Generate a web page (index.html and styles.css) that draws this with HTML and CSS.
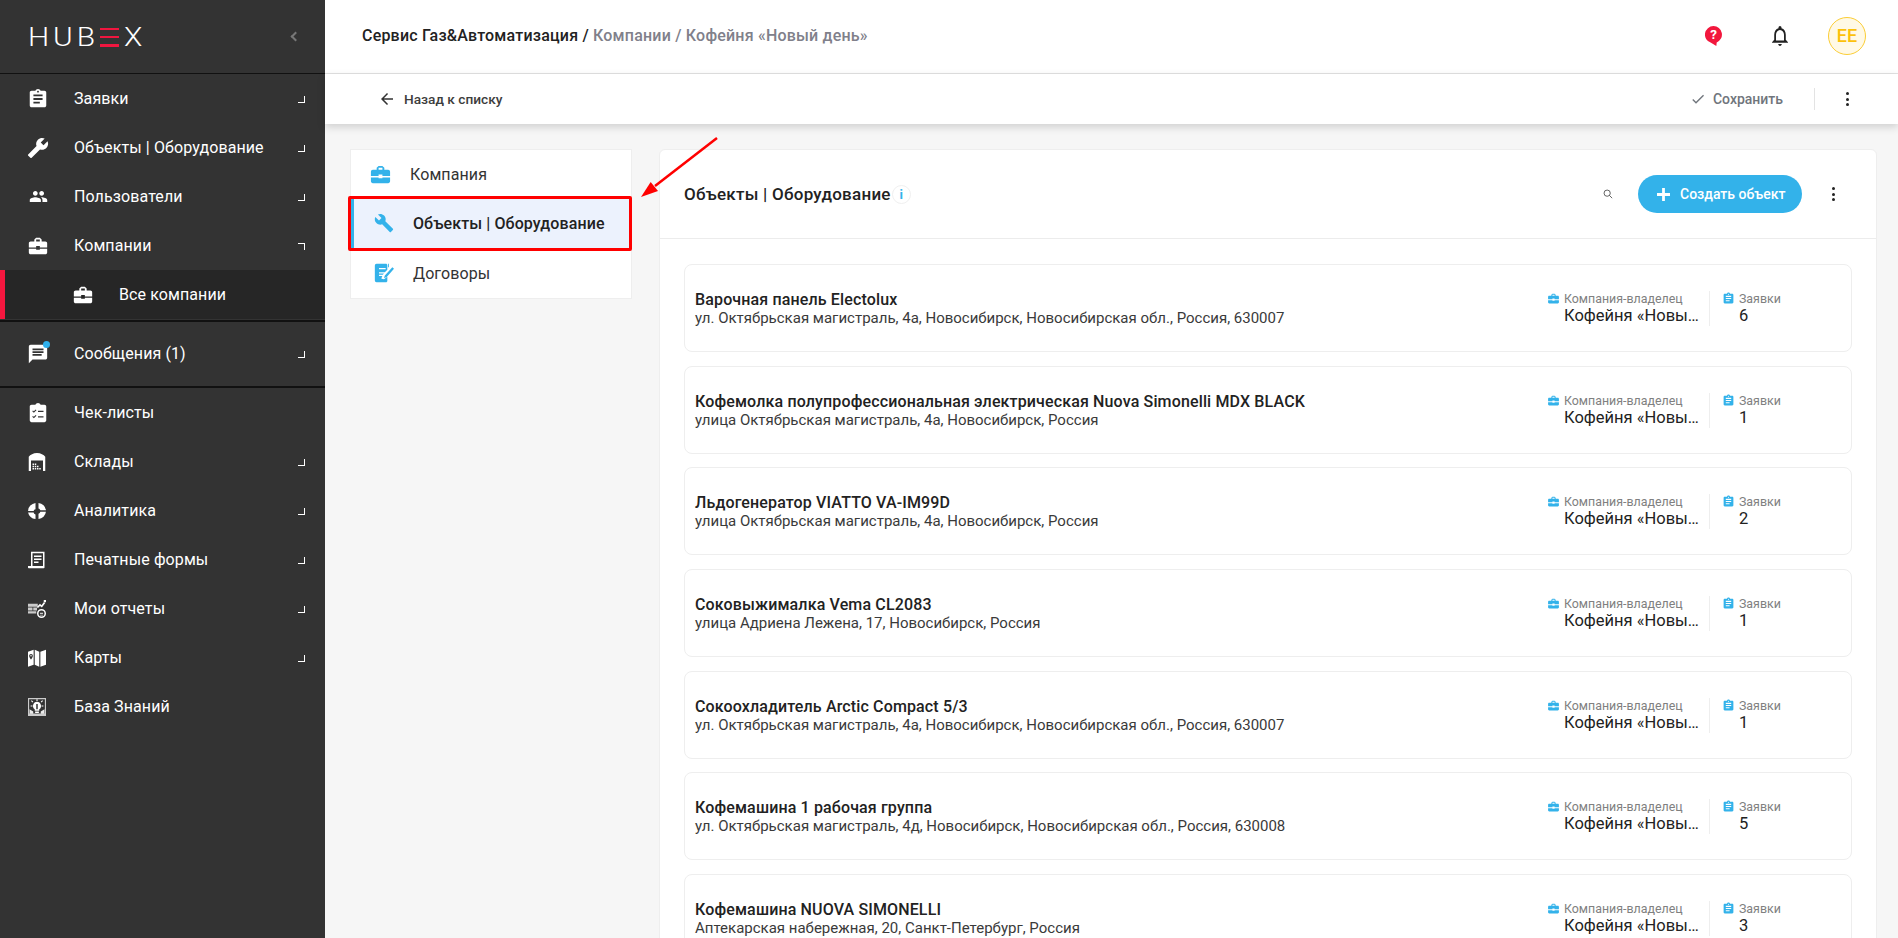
FILE: index.html
```html
<!DOCTYPE html>
<html lang="ru">
<head>
<meta charset="utf-8">
<title>Hubex</title>
<link rel="stylesheet" href="styles.css">
</head>
<body>
<svg class="defs" width="0" height="0" aria-hidden="true">
  <symbol id="i-assign" viewBox="0 0 24 24"><path d="M19 3h-4.18C14.4 1.84 13.3 1 12 1c-1.3 0-2.4.84-2.82 2H5c-1.1 0-2 .9-2 2v14c0 1.1.9 2 2 2h14c1.1 0 2-.9 2-2V5c0-1.1-.9-2-2-2zm-7 0c.55 0 1 .45 1 1s-.45 1-1 1-1-.45-1-1 .45-1 1-1zm2 14H7v-2h7v2zm3-4H7v-2h10v2zm0-4H7V7h10v2z"/></symbol>
  <symbol id="i-wrench" viewBox="0 0 24 24"><path d="M22.7 19l-9.1-9.1c.9-2.3.4-5-1.5-6.9-2-2-5-2.4-7.4-1.3L9 6 6 9 1.6 4.7C.4 7.1.9 10.1 2.9 12.1c1.9 1.9 4.6 2.4 6.9 1.5l9.1 9.1c.4.4 1 .4 1.4 0l2.3-2.3c.5-.4.5-1.1.1-1.4z"/></symbol>
  <symbol id="i-people" viewBox="0 0 24 24"><path d="M16 11c1.66 0 2.99-1.34 2.99-3S17.66 5 16 5c-1.66 0-3 1.34-3 3s1.34 3 3 3zm-8 0c1.66 0 2.99-1.34 2.99-3S9.66 5 8 5C6.34 5 5 6.34 5 8s1.34 3 3 3zm0 2c-2.33 0-7 1.17-7 3.5V19h14v-2.5c0-2.33-4.67-3.5-7-3.5zm8 0c-.29 0-.62.02-.97.05 1.16.84 1.97 1.97 1.97 3.45V19h6v-2.5c0-2.33-4.67-3.5-7-3.5z"/></symbol>
  <symbol id="i-case" viewBox="0 0 24 24"><path d="M10 16v-1H2v4c0 1.11.89 2 2 2h16c1.11 0 2-.89 2-2v-4h-8v1h-4zm10-9h-4.01V5l-2-2h-4l-2 2v2H4c-1.1 0-2 .9-2 2v4.500h8V12h4v1.500h8V9c0-1.1-.9-2-2-2zm-6 0h-4V5h4v2z"/></symbol>
  <symbol id="i-msg" viewBox="0 0 24 24"><path d="M20 2H4c-1.1 0-1.99.9-1.99 2L2 22l4-4h14c1.1 0 2-.9 2-2V4c0-1.1-.9-2-2-2zm-4 12H6v-2h10v2zm2-3H6V9h12v2zm0-3H6V6h12v2z"/></symbol>
  <symbol id="i-check-list" viewBox="0 0 24 24"><path fill-rule="evenodd" d="M19 3h-4.200C14.400 1.800 13.300 1 12 1s-2.400.8-2.800 2H5c-1.100 0-2 .9-2 2v15c0 1.100.9 2 2 2h14c1.100 0 2-.9 2-2V5c0-1.100-.9-2-2-2zM6.500 9.200l1 1 2-2 .8.8-2.800 2.800-1.800-1.800zM12 9.500h6V11h-6zM6.500 15.200l1 1 2-2 .8.8-2.800 2.800-1.800-1.800zM12 15.500h6V17h-6z"/></symbol>
  <symbol id="i-store" viewBox="0 0 24 24"><path fill-rule="evenodd" d="M12 0C7 0 3 2.500 1 5v19h22V5c-2-2.500-6-5-11-5zM4 10h16v14H4z"/><path d="M6 14h2v2H6zm3 0h2v2H9zm-3 3h2v2H6zm3 0h2v2H9zm3 0h2v2h-2zm-6 3h2v2H6zm3 0h2v2H9zm3 0h2v2h-2zm3 0h2v2h-2z"/></symbol>
  <symbol id="i-pie" viewBox="0 0 24 24"><path d="M10 1.200v8.300a3 3 0 0 0-2.500 2.500H0.100A11.500 11.500 0 0 1 10 1.200zM.1 14h7.400a3 3 0 0 0 2.500 2.500v6.300A11.500 11.500 0 0 1 .1 14zM14 1.200a11 11 0 0 1 9.900 9.800h-7.400a3.500 3.500 0 0 0-2.500-2.500zM14 15.500a3.500 3.500 0 0 0 2.500-2.500h7.400a11 11 0 0 1-9.900 9.800z"/></symbol>
  <symbol id="i-print" viewBox="0 0 24 24"><path fill-rule="evenodd" d="M4 1h18v21a1 1 0 0 1-1 1H1a1 1 0 0 1-1-1v-2h4zm2 2v17h14V3zM8 6h10v2H8zm0 4h10v2H8zm0 4h6v2H8z"/></symbol>
  <symbol id="i-report" viewBox="0 0 24 24"><path opacity=".75" d="M0 5h13v4H0zm0 5h6v4H0zm7 0h5v4H7zM0 15h11v3H0z"/><path d="M12 9l4-4 2 2 3-4 2 1-4.500 6-2.500-2-3 3zM21 0h3v3h-3z"/><path fill-rule="evenodd" d="M18 12a6 6 0 1 0 0 12 6 6 0 0 0 0-12zm0 2a4 4 0 1 1 0 8 4 4 0 0 1 0-8z"/><path opacity=".75" d="M16 17h4v1.500h-4zm0 2.500h4v1h-4z"/></symbol>
  <symbol id="i-map" viewBox="0 0 24 24"><path fill-rule="evenodd" d="M0 3.500 7.500 1v20L0 23.500zM4 6.500a2.500 2.500 0 0 0-2.500 2.500C1.500 11 4 14 4 14s2.500-3 2.500-5A2.500 2.500 0 0 0 4 6.500zm0 1.500a1 1 0 1 1 0 2 1 1 0 0 1 0-2zM9 1l6 2.500v20L9 21zM16.500 3.500 24 1v20l-7.500 2.500z"/></symbol>
  <symbol id="i-know" viewBox="0 0 24 24"><path opacity=".75" fill-rule="evenodd" d="M0 0h24v24H0zm1.500 1.500v19h21v-19z"/><path opacity=".9" d="M2 15l5 3v3H2zm20 0l-5 3v3h5z"/><path fill-rule="evenodd" d="M12 5a5.500 5.500 0 0 0-3 10v2h6v-2a5.500 5.500 0 0 0-3-10zm-1 3h2v7h-2z"/><path d="M9.500 18h5v2h-5zM11.300 1.500h1.400v2.500h-1.400zM4 4l1-1 2 2-1 1zM20 4l-1-1-2 2 1 1zM3.500 10h2.500v1.400H3.500zM18 10h2.500v1.400H18z"/></symbol>
  <symbol id="i-contract" viewBox="0 0 24 24"><path d="M3 1h12l1 1v6l-3 3H6v1.500h6L10.500 14H6v1.500h4L9 18v1l3 .5 4-3V22l-1 1H3a2 2 0 0 1-2-2V3a2 2 0 0 1 2-2zm3 5v1.500h8V6z"/><path d="M22 5l2 2-9 10-3 1 1-3zM18 1v4h-1V1z"/></symbol>
</svg>

<div class="app">
  <aside class="sidebar">
    <div class="brand">
      <span class="logo"><span class="logo-hub">HUB</span><span class="logo-e"><i></i><i></i><i></i></span><span class="logo-x">X</span></span>
      <span class="collapse"></span>
    </div>
    <nav class="menu">
      <a class="menu-item"><svg class="mi"><use href="#i-assign"/></svg><span>Заявки</span><b class="corner"></b></a>
      <a class="menu-item"><svg class="mi flip"><use href="#i-wrench"/></svg><span>Объекты | Оборудование</span><b class="corner"></b></a>
      <a class="menu-item"><svg class="mi mi-sm"><use href="#i-people"/></svg><span>Пользователи</span><b class="corner"></b></a>
      <a class="menu-item"><svg class="mi"><use href="#i-case"/></svg><span>Компании</span><b class="corner open"></b></a>
      <a class="menu-item child"><svg class="mi"><use href="#i-case"/></svg><span>Все компании</span></a>
    </nav>
    <nav class="menu msgs">
      <a class="menu-item"><span class="badge-wrap"><svg class="mi"><use href="#i-msg"/></svg><i class="dot"></i></span><span>Сообщения (1)</span><b class="corner"></b></a>
    </nav>
    <nav class="menu rest">
      <a class="menu-item"><svg class="mi"><use href="#i-check-list"/></svg><span>Чек-листы</span></a>
      <a class="menu-item"><svg class="mi mi-box"><use href="#i-store"/></svg><span>Склады</span><b class="corner"></b></a>
      <a class="menu-item"><svg class="mi mi-box"><use href="#i-pie"/></svg><span>Аналитика</span><b class="corner"></b></a>
      <a class="menu-item"><svg class="mi mi-box"><use href="#i-print"/></svg><span>Печатные формы</span><b class="corner"></b></a>
      <a class="menu-item"><svg class="mi mi-box"><use href="#i-report"/></svg><span>Мои отчеты</span><b class="corner"></b></a>
      <a class="menu-item"><svg class="mi mi-box"><use href="#i-map"/></svg><span>Карты</span><b class="corner"></b></a>
      <a class="menu-item"><svg class="mi mi-box"><use href="#i-know"/></svg><span>База Знаний</span></a>
    </nav>
  </aside>

  <div class="content">
    <header class="topbar">
      <div class="crumbs"><span class="crumb-root">Сервис Газ&amp;Автоматизация /</span> <span>Компании</span> / <span>Кофейня «Новый день»</span></div>
      <div class="top-icons">
        <svg class="help" viewBox="0 0 24 28"><path d="M12 0a12 12 0 0 0-3.500 23.500L16 28l.5-4.900A12 12 0 0 0 12 0z"/><text x="12" y="18" class="help-q">?</text></svg>
        <svg class="bell" viewBox="3 1.800 18 21.200" preserveAspectRatio="none"><path d="M12 23c1.100 0 2-.9 2-2h-4c0 1.100.9 2 2 2zm6.500-6.500V11c0-3.300-1.800-6.100-4.800-6.800V3.500a1.700 1.700 0 0 0-3.400 0v.7C7.300 4.900 5.500 7.700 5.500 11v5.500L3 19v.5h18V19zm-2 .8h-9V11c0-2.700 1.900-5 4.500-5s4.500 2.300 4.500 5z"/></svg>
        <span class="avatar">EE</span>
      </div>
    </header>
    <div class="toolbar">
      <a class="back"><svg viewBox="0 0 24 24"><path d="M20 11H7.830l5.590-5.590L12 4l-8 8 8 8 1.410-1.410L7.830 13H20v-2z"/></svg>Назад к списку</a>
      <div class="tool-right">
        <a class="save"><svg viewBox="0 0 24 24"><path d="M9 16.170L4.830 12l-1.420 1.410L9 19 21 7l-1.410-1.410z"/></svg>Сохранить</a>
        <span class="vsep"></span>
        <span class="dots"><i></i><i></i><i></i></span>
      </div>
    </div>

    <main class="page">
      <ul class="side-tabs">
        <li class="tab tab-first"><svg class="tab-ico"><use href="#i-case"/></svg>Компания</li>
        <li class="tab active"><svg class="tab-ico"><use href="#i-wrench"/></svg>Объекты | Оборудование</li>
        <li class="tab"><svg class="tab-ico"><use href="#i-contract"/></svg>Договоры</li>
      </ul>

      <section class="panel">
        <div class="panel-head">
          <h1>Объекты | Оборудование</h1>
          <span class="info">i</span>
          <svg class="search" viewBox="0 0 24 24"><circle cx="10" cy="10" r="7.500"/><path d="M15.500 15.500 22 22"/></svg>
          <button class="create"><svg viewBox="0 0 14 14"><path d="M5.500 0h3v5.500H14v3H8.500V14h-3V8.500H0v-3h5.500z"/></svg>Создать объект</button>
          <span class="dots"><i></i><i></i><i></i></span>
        </div>
        <div class="rows">
          <article class="row">
            <div class="row-main"><h2>Варочная панель Electolux</h2><p>ул. Октябрьская магистраль, 4а, Новосибирск, Новосибирская обл., Россия, 630007</p></div>
            <div class="meta meta-co"><div class="meta-label"><svg><use href="#i-case"/></svg>Компания-владелец</div><div class="meta-val">Кофейня «Новы…</div></div>
            <div class="meta meta-or"><div class="meta-label"><svg><use href="#i-assign"/></svg>Заявки</div><div class="meta-val">6</div></div>
          </article>
          <article class="row">
            <div class="row-main"><h2>Кофемолка полупрофессиональная электрическая Nuova Simonelli MDX BLACK</h2><p>улица Октябрьская магистраль, 4а, Новосибирск, Россия</p></div>
            <div class="meta meta-co"><div class="meta-label"><svg><use href="#i-case"/></svg>Компания-владелец</div><div class="meta-val">Кофейня «Новы…</div></div>
            <div class="meta meta-or"><div class="meta-label"><svg><use href="#i-assign"/></svg>Заявки</div><div class="meta-val">1</div></div>
          </article>
          <article class="row">
            <div class="row-main"><h2>Льдогенератор VIATTO VA-IM99D</h2><p>улица Октябрьская магистраль, 4а, Новосибирск, Россия</p></div>
            <div class="meta meta-co"><div class="meta-label"><svg><use href="#i-case"/></svg>Компания-владелец</div><div class="meta-val">Кофейня «Новы…</div></div>
            <div class="meta meta-or"><div class="meta-label"><svg><use href="#i-assign"/></svg>Заявки</div><div class="meta-val">2</div></div>
          </article>
          <article class="row">
            <div class="row-main"><h2>Соковыжималка Vema CL2083</h2><p>улица Адриена Лежена, 17, Новосибирск, Россия</p></div>
            <div class="meta meta-co"><div class="meta-label"><svg><use href="#i-case"/></svg>Компания-владелец</div><div class="meta-val">Кофейня «Новы…</div></div>
            <div class="meta meta-or"><div class="meta-label"><svg><use href="#i-assign"/></svg>Заявки</div><div class="meta-val">1</div></div>
          </article>
          <article class="row">
            <div class="row-main"><h2>Сокоохладитель Arctic Compact 5/3</h2><p>ул. Октябрьская магистраль, 4а, Новосибирск, Новосибирская обл., Россия, 630007</p></div>
            <div class="meta meta-co"><div class="meta-label"><svg><use href="#i-case"/></svg>Компания-владелец</div><div class="meta-val">Кофейня «Новы…</div></div>
            <div class="meta meta-or"><div class="meta-label"><svg><use href="#i-assign"/></svg>Заявки</div><div class="meta-val">1</div></div>
          </article>
          <article class="row">
            <div class="row-main"><h2>Кофемашина 1 рабочая группа</h2><p>ул. Октябрьская магистраль, 4д, Новосибирск, Новосибирская обл., Россия, 630008</p></div>
            <div class="meta meta-co"><div class="meta-label"><svg><use href="#i-case"/></svg>Компания-владелец</div><div class="meta-val">Кофейня «Новы…</div></div>
            <div class="meta meta-or"><div class="meta-label"><svg><use href="#i-assign"/></svg>Заявки</div><div class="meta-val">5</div></div>
          </article>
          <article class="row">
            <div class="row-main"><h2>Кофемашина NUOVA SIMONELLI</h2><p>Аптекарская набережная, 20, Санкт-Петербург, Россия</p></div>
            <div class="meta meta-co"><div class="meta-label"><svg><use href="#i-case"/></svg>Компания-владелец</div><div class="meta-val">Кофейня «Новы…</div></div>
            <div class="meta meta-or"><div class="meta-label"><svg><use href="#i-assign"/></svg>Заявки</div><div class="meta-val">3</div></div>
          </article>
        </div>
      </section>
    </main>
  </div>
</div>

<svg class="annot-arrow" viewBox="0 0 90 70" aria-hidden="true"><path d="M82 5 20 53"/><polygon points="6,64 15.700,48.900 23,58"/></svg>
</body>
</html>
```

FILE: styles.css
```css
* { box-sizing: border-box; }
html, body { margin: 0; height: 938px; overflow: hidden; }
body { font-family: Roboto, "Noto Sans", sans-serif; background: #f6f6f6; color: #222; }
.defs { position: absolute; }
ul, h1, h2, p { margin: 0; padding: 0; }
ul { list-style: none; }

.app { display: flex; height: 938px; }

/* sidebar */
.sidebar { width: 325px; flex: none; background: #333; color: #fff; }
.brand { height: 74px; display: flex; align-items: center; justify-content: space-between; padding: 0 26px 0 30px; border-bottom: 1px solid #111; }
.logo { display: flex; align-items: center; height: 19px; margin-top: 1px; }
.logo-hub, .logo-x { display: block; font-size: 26px; line-height: 19px; font-weight: 300; color: #fff; transform: scaleX(1.15); transform-origin: left center; }
.logo-hub { width: 72px; letter-spacing: 3.400px; margin-left: -2px; }
.logo-x { width: 18px; }
.logo-e { display: flex; flex-direction: column; justify-content: space-between; width: 19px; height: 19px; margin-right: 5px; }
.logo-e i { display: block; height: 2.500px; background: #f0163f; }
.collapse { width: 7px; height: 7px; border-left: 2px solid #777; border-bottom: 2px solid #777; transform: rotate(45deg); }
.menu-item { display: flex; align-items: center; height: 49px; padding: 0 20px 0 27px; font-size: 16px; letter-spacing: .1px; position: relative; }
.menu-item > span:not(.badge-wrap) { margin-left: 25px; flex: 1; }
.mi { width: 22px; height: 22px; fill: #fff; flex: none; display: block; overflow: visible; }
.mi-sm { width: 19px; height: 19px; margin: 0 1.500px; }
.mi-box { width: 18px; height: 18px; margin: 0 3px 0 1px; }
.flip { transform: scaleX(-1); }
.corner { width: 7px; height: 7px; border-right: 1.500px solid #fff; border-bottom: 1.500px solid #fff; margin-top: 1px; }
.corner.open { border-bottom: 0; border-top: 1.500px solid #fff; }
.child { background: #262626; padding-left: 72px; box-shadow: inset 5px 0 #f5173f; }
.menu:first-of-type { padding-bottom: 1px; }
.msgs { border-top: 2px solid #111; padding: 7px 0 8px; border-bottom: 2px solid #111; }
.badge-wrap { position: relative; display: block; }
.dot { position: absolute; top: -1.500px; right: -1.200px; width: 7px; height: 7px; border-radius: 50%; background: #2fb0ec; }

/* top */
.content { flex: 1; min-width: 0; display: flex; flex-direction: column; }
.topbar { height: 74px; background: #fff; border-bottom: 1px solid #e3e3e3; display: flex; align-items: center; justify-content: space-between; padding: 0 32px 2px 37px; }
.crumbs { font-size: 16px; font-weight: 500; letter-spacing: .2px; color: #80808a; }
.crumb-root { color: #222; }
.top-icons { display: flex; align-items: center; }
.help { width: 17px; height: 20px; fill: #f2173d; margin-right: 50px; }
.help-q { font: 700 19px Roboto, sans-serif; fill: #fff; text-anchor: middle; }
.bell { width: 16px; height: 20px; fill: #222; margin-right: 40px; }
.avatar { width: 38px; height: 38px; border-radius: 50%; border: 1px solid #fbcd35; background: #fff9e6; color: #fcc10a; font-size: 18px; font-weight: 500; display: flex; align-items: center; justify-content: center; }

.toolbar { height: 50px; background: #fff; box-shadow: 0 3px 8px rgba(0,0,0,.16); display: flex; align-items: center; justify-content: space-between; padding: 0 48px 0 53px; position: relative; }
.back { display: flex; align-items: center; font-size: 13.700px; font-weight: 500; color: #3d3d3d; }
.back svg { width: 18px; height: 18px; fill: #333; margin-right: 8px; }
.tool-right { display: flex; align-items: center; }
.save { display: flex; align-items: center; font-size: 14px; font-weight: 500; color: #70757c; }
.save svg { width: 16px; height: 16px; fill: #70757c; margin-right: 7px; }
.vsep { width: 1px; height: 22px; background: #e3e3e3; margin: 0 29px 0 31px; }
.dots { display: flex; flex-direction: column; gap: 2.500px; align-items: center; width: 6px; }
.dots i { width: 3px; height: 3px; border-radius: 50%; background: #222; display: block; }

/* body */
.page { flex: 1; min-height: 0; display: flex; align-items: flex-start; gap: 27px; padding: 25px 21px 0 25px; overflow: hidden; }
.side-tabs { width: 282px; flex: none; background: #fff; border: 1px solid #eee; }
.tab { height: 50px; display: flex; align-items: center; font-size: 16px; letter-spacing: .1px; color: #333; padding-left: 23px; position: relative; }
.tab-ico { width: 20px; height: 20px; fill: #33b2ea; margin-right: 19px; flex: none; overflow: visible; }
.tab-first { height: 48px; padding-left: 18px; }
.tab-first .tab-ico { width: 23px; height: 23px; margin-right: 18px; }
.active { background: #ecf2fd; border-left: 4px solid #33b2ea; padding-left: 20px; font-weight: 500; letter-spacing: .1px; color: #222; margin-left: -1px; }
.active::after { content: ""; position: absolute; inset: -2px -1px -3px -6px; border: 3px solid #f00; border-radius: 2px; }

.panel { flex: 1; min-width: 0; background: #fff; border: 1px solid #eee; border-radius: 6px 6px 0 0; }
.panel-head { height: 89px; display: flex; align-items: center; padding: 0 40px 0 24px; border-bottom: 1px solid #ececec; }
.panel-head h1 { font-size: 17px; font-weight: 500; letter-spacing: .25px; color: #222; }
.info { width: 19px; height: 19px; border-radius: 50%; border: 1px solid #f0f0f0; color: #33b2ea; font-size: 13px; font-weight: 700; display: flex; align-items: center; justify-content: center; margin-left: 1px; }
.search { width: 10px; height: 10px; margin-left: auto; fill: none; stroke: #444; stroke-width: 2; }
.create { margin-left: 25px; margin-right: 28px; width: 164px; height: 38px; border: 0; border-radius: 19px; background: #33b2ea; color: #fff; font: 500 14px Roboto, sans-serif; display: flex; align-items: center; gap: 10px; padding: 0 0 0 19px; }
.create svg { width: 13px; height: 13px; fill: #fff; }

.rows { padding: 25px 24px 0; }
.row { height: 88px; margin-bottom: 13.670px; border: 1px solid #eee; border-radius: 8px; display: flex; align-items: center; padding: 1px 0 0 10px; background: #fff; }
.row-main { flex: 1; min-width: 0; }
.row h2 { font-size: 16px; font-weight: 500; letter-spacing: .14px; color: #222; line-height: 19px; }
.row p { font-size: 15px; color: #3a3a3a; line-height: 18px; }
.meta { display: flex; flex-direction: column; }
.meta-label { font-size: 12.400px; color: #808080; line-height: 15px; position: relative; }
.meta-label svg { width: 13px; height: 13px; fill: #33b2ea; position: absolute; left: -17px; top: 1px; }
.meta-val { font-size: 16.500px; color: #222; line-height: 20px; white-space: nowrap; }
.meta-co { width: 146px; border-right: 1px solid #eee; }
.meta-or { width: 141px; padding-left: 29px; }
.annot-arrow { position: absolute; left: 635px; top: 133px; width: 90px; height: 70px; }
.annot-arrow path { stroke: #f00; stroke-width: 2.500; fill: none; }
.annot-arrow polygon { fill: #f00; }
```
